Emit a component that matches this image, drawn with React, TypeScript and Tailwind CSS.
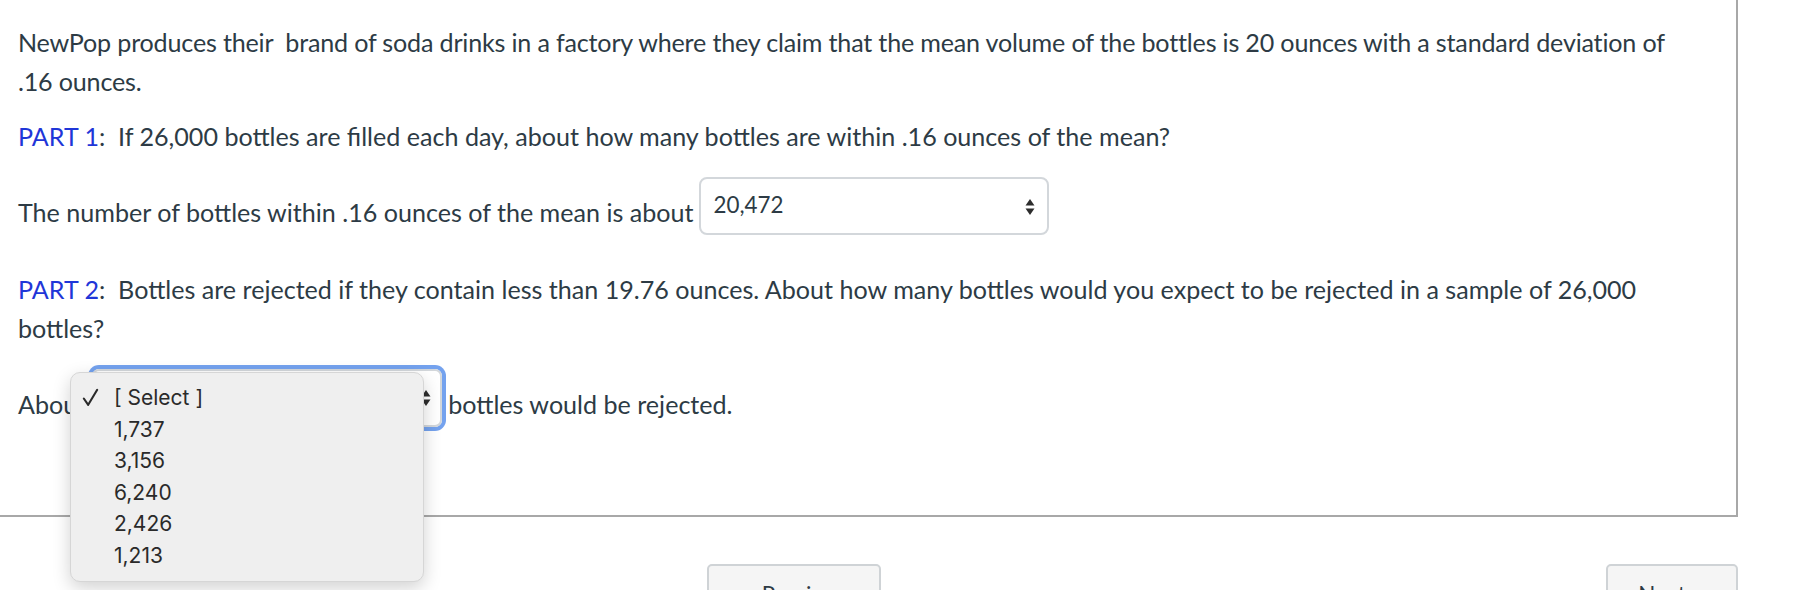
import React from "react";

function Arrows() {
  return (
    <svg width="10" height="18" viewBox="0 0 10 18" className="shrink-0">
      <path d="M5 1 L9.5 7.5 L0.5 7.5 Z" fill="#2d2d2d" />
      <path d="M5 17 L9.5 10.5 L0.5 10.5 Z" fill="#2d2d2d" />
    </svg>
  );
}

function Check() {
  return (
    <svg width="17" height="19" viewBox="0 0 17 19" className="ml-[11px]">
      <path d="M1.8 10.5 L6.2 16.8 L15.2 1.8" fill="none" stroke="#2a2a2a" strokeWidth="2.1" strokeLinecap="round" strokeLinejoin="round" />
    </svg>
  );
}

const options = ["[ Select ]", "1,737", "3,156", "6,240", "2,426", "1,213"];

export default function App() {
  return (
    <div className="relative h-[590px] w-[1800px] overflow-hidden bg-white font-['Lato','Liberation_Sans',sans-serif] text-[25.1px] text-[#2d3b45]">
      {/* Question box, left and top edges sit off-screen */}
      <div className="h-[517px] w-[1738px] border-r-2 border-b-2 border-[#a8a8a8] pl-[18px] pt-[23px]">
        <p className="whitespace-nowrap leading-[39px] tracking-[-0.18px]">
          NewPop produces their&nbsp; brand of soda drinks in a factory where they claim that the mean volume of the bottles is 20 ounces with a standard deviation of
          <br />
          .16 ounces.
        </p>

        <p className="mt-[16px] whitespace-nowrap leading-[39px]">
          <span className="text-[#1f36d8]">PART 1</span>:&nbsp; If 26,000 bottles are filled each day, about how many bottles are within .16 ounces of the mean?
        </p>

        <div className="mt-[21px] flex items-start">
          <span className="mt-[16px] whitespace-nowrap leading-[39px]">The number of bottles within .16 ounces of the mean is about</span>
          <div className="ml-[6px] flex h-[58px] w-[350px] items-center justify-between rounded-[8px] border-2 border-[#d3d7db] pl-[12px] pr-[12px] pt-[1px] text-[22.4px]">
            <span className="mb-[4px]">20,472</span>
            <Arrows />
          </div>
        </div>

        <p className="mt-[35px] whitespace-nowrap leading-[39px]">
          <span className="text-[#1f36d8]">PART 2</span>:&nbsp; Bottles are rejected if they contain less than 19.76 ounces. About how many bottles would you expect to be rejected in a sample of 26,000
          <br />
          bottles?
        </p>

        <div className="mt-[21px] flex items-start">
          <span className="mt-[16px] whitespace-nowrap leading-[39px]">About</span>
          <div className="ml-[6px] flex h-[58px] w-[350px] items-center justify-end rounded-[7px] border-2 border-[#d3d7db] pr-[9px] shadow-[0_0_0_4px_#74a2ee]">
            <Arrows />
          </div>
          <span className="ml-[6px] mt-[16px] whitespace-nowrap leading-[39px]">bottles would be rejected.</span>
        </div>
      </div>

      {/* Navigation buttons */}
      <div className="mt-[47px] flex w-[1738px]">
        <button className="ml-[707px] flex h-[54px] w-[174px] items-start justify-center gap-[8px] rounded-[5px] border-2 border-[#cfd3d6] bg-[#f5f5f5] pt-[12px] text-[22.4px] text-[#2d3b45]">
          <span className="text-[16px] leading-[34px]">◀</span>
          <span>Previous</span>
        </button>
        <button className="ml-auto flex h-[54px] w-[132px] items-start justify-center gap-[8px] rounded-[5px] border-2 border-[#cfd3d6] bg-[#f5f5f5] pt-[12px] text-[22.4px] text-[#2d3b45]">
          <span>Next</span>
          <span className="text-[16px] leading-[34px]">▶</span>
        </button>
      </div>

      {/* Open native popup menu */}
      <div className="absolute left-[70px] top-[372px] w-[354px] rounded-[10px] border border-[#d6d6d6] bg-[#efefef] py-[9px] font-['Inter','Liberation_Sans',sans-serif] text-[21px] text-[#2a2a2a] shadow-[0_6px_18px_rgba(0,0,0,0.18)]">
        {options.map((o, i) => (
          <div key={o} className="flex h-[31.6px] items-center">
            <span className="flex w-[43px] items-center">{i === 0 ? <Check /> : null}</span>
            <span>{o}</span>
          </div>
        ))}
      </div>
    </div>
  );
}
